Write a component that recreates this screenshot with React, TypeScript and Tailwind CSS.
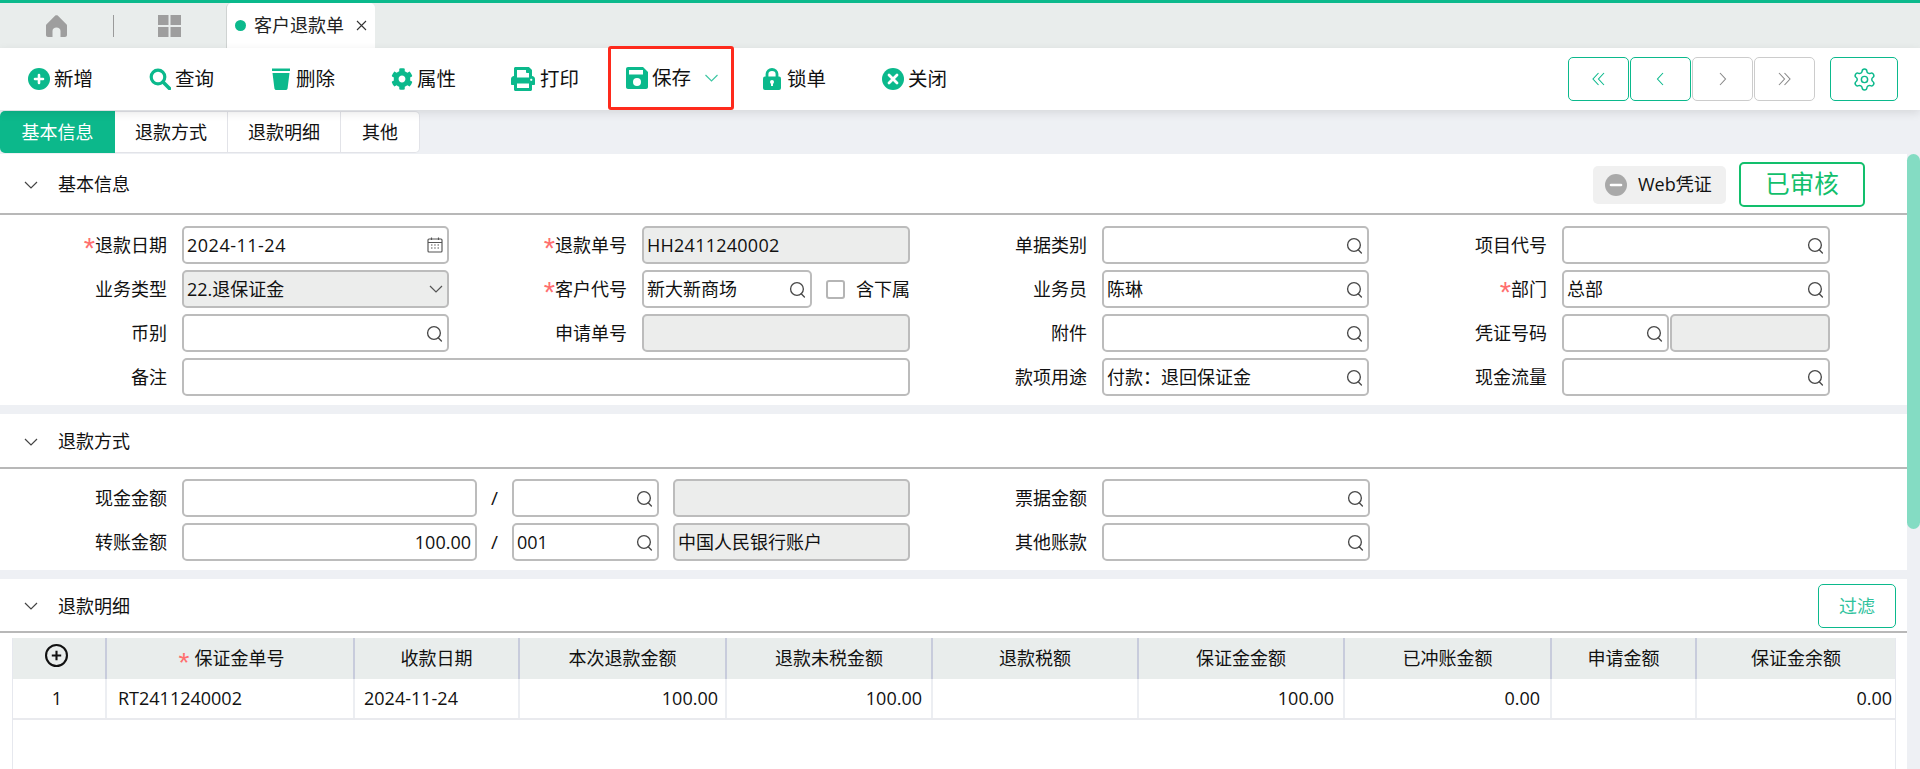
import React from "react";
import { Settings } from "lucide-react";
import { FaCog, FaPrint } from "react-icons/fa";

const G = "#0bb98c";

function SearchIcon() {
  return (
    <svg width="17" height="17" viewBox="0 0 16 16" fill="none" stroke="#484848" strokeWidth="1.25" className="shrink-0">
      <circle cx="7.5" cy="7.5" r="6" />
      <path d="M11.5 12 L14.5 15" strokeLinecap="round" />
    </svg>
  );
}
function CalendarIcon() {
  return (
    <svg width="16" height="16" viewBox="0 0 16 16" fill="none" stroke="#555" strokeWidth="1.15" className="shrink-0">
      <rect x="1" y="2" width="14" height="13" rx="1" />
      <path d="M1 5.5H15M4.5 0.5V3M11.5 0.5V3" />
      <path d="M4 8H5.5M7.2 8H8.7M10.5 8H12M4 11H5.5M7.2 11H8.7M10.5 11H12" />
    </svg>
  );
}
function Chevron({ color = "#555", w = 14, h = 8 }: { color?: string; w?: number; h?: number }) {
  return (
    <svg width={w} height={h} viewBox="0 0 14 8" fill="none" stroke={color} strokeWidth="1.2" className="shrink-0">
      <path d="M1 1 L7 7 L13 1" />
    </svg>
  );
}
function Pager({ kind, color }: { kind: "ll" | "l" | "r" | "rr"; color: string }) {
  const d = {
    ll: "M6.5 1 L1 7 L6.5 13 M12 1 L6.5 7 L12 13",
    l: "M9 1 L3.5 7 L9 13",
    r: "M4 1 L9.5 7 L4 13",
    rr: "M1 1 L6.5 7 L1 13 M6.5 1 L12 7 L6.5 13",
  }[kind];
  return (
    <svg width="13" height="14" viewBox="0 0 13 14" fill="none" stroke={color} strokeWidth="1.1">
      <path d={d} />
    </svg>
  );
}

const toolIcons: Record<string, React.ReactNode> = {
  新增: (
    <svg width="22" height="22" viewBox="0 0 22 22">
      <circle cx="11" cy="11" r="11" fill={G} />
      <path d="M11 7V15M7 11H15" stroke="#fff" strokeWidth="2.6" strokeLinecap="round" />
    </svg>
  ),
  查询: (
    <svg width="22" height="22" viewBox="0 0 22 22" fill="none" stroke={G}>
      <circle cx="9" cy="9" r="6.8" strokeWidth="3.2" />
      <path d="M14 14 L20.5 20.5" strokeWidth="3.6" strokeLinecap="round" />
    </svg>
  ),
  删除: (
    <svg width="20" height="22" viewBox="0 0 20 22" fill={G}>
      <path d="M1 0.5H19V3H1Z" />
      <path d="M1.5 5H18.5L16.6 20.2C16.5 21.3 15.6 22 14.6 22H5.4C4.4 22 3.5 21.3 3.4 20.2Z" />
    </svg>
  ),
  属性: <FaCog size={22} color={G} />,
  打印: <FaPrint size={24} color={G} />,
  保存: (
    <svg width="22" height="22" viewBox="0 0 22 22">
      <path d="M2 0H17L22 5V20C22 21.1 21.1 22 20 22H2C0.9 22 0 21.1 0 20V2C0 0.9 0.9 0 2 0Z" fill={G} />
      <rect x="3" y="3" width="14" height="4.5" fill="#fff" />
      <circle cx="11" cy="15" r="4" fill="#fff" />
    </svg>
  ),
  锁单: (
    <svg width="18" height="22" viewBox="0 0 18 22">
      <path d="M4 10V6C4 3.2 6.2 1.5 9 1.5C11.8 1.5 14 3.2 14 6V10" fill="none" stroke={G} strokeWidth="2.8" />
      <rect x="0" y="8.5" width="18" height="13.5" rx="2" fill={G} />
      <circle cx="9" cy="14" r="2" fill="#fff" />
      <rect x="8" y="14" width="2" height="4" fill="#fff" />
    </svg>
  ),
  关闭: (
    <svg width="22" height="22" viewBox="0 0 22 22">
      <circle cx="11" cy="11" r="11" fill={G} />
      <path d="M7 7L15 15M15 7L7 15" stroke="#fff" strokeWidth="2.8" strokeLinecap="round" />
    </svg>
  ),
};

function Tool({ name, className, wide }: { name: string; className: string; wide?: boolean }) {
  return (
    <div className={`flex items-center shrink-0 ${wide ? "gap-[5px]" : "gap-[4px]"} ${className}`}>
      <span className={`flex justify-center ${wide ? "w-[24px]" : "w-[22px]"}`}>{toolIcons[name]}</span>
      <span className="text-[19.5px] text-[#111]">{name}</span>
    </div>
  );
}

function Label({ text, star }: { text: string; star?: boolean }) {
  return (
    <div className="flex items-center justify-end pr-[15px] text-[18px] text-[#111] whitespace-nowrap">
      {star && <span className="text-[#ff6f6f] text-[29px] leading-none font-['Liberation_Sans'] h-[22px]">*</span>}
      {text}
    </div>
  );
}

function Input({
  value,
  icon,
  disabled,
  right,
  className = "",
  valueClass = "",
}: {
  value?: string;
  icon?: "search" | "cal" | "down";
  disabled?: boolean;
  right?: boolean;
  className?: string;
  valueClass?: string;
}) {
  return (
    <div
      className={`h-[38px] border-2 border-[#bcbcbc] rounded-[5px] flex items-center pl-[3px] pr-[4px] text-[18px] text-[#111] whitespace-nowrap ${
        disabled ? "bg-[#ecedec]" : "bg-white"
      } ${right ? "justify-end" : "justify-between"} ${className}`}
    >
      <span className={valueClass}>{value}</span>
      {icon === "search" && <SearchIcon />}
      {icon === "cal" && <CalendarIcon />}
      {icon === "down" && <Chevron />}
    </div>
  );
}

function SectionHead({ title, h, children }: { title: string; h: string; children?: React.ReactNode }) {
  return (
    <div className={`flex items-center border-b-2 border-[#b8b8b8] pl-[24px] pt-[2px] ${h}`}>
      <Chevron color="#444" />
      <span className="ml-[20px] text-[18px] text-[#111]">{title}</span>
      <div className="ml-auto flex items-center">{children}</div>
    </div>
  );
}

const headers = ["保证金单号", "收款日期", "本次退款金额", "退款未税金额", "退款税额", "保证金金额", "已冲账金额", "申请金额", "保证金余额"];
const cols = "grid grid-cols-[94px_248px_165px_207px_206px_206px_206px_207px_145px_198px]";

export default function App() {
  return (
    <div className="w-[1920px] h-[769px] overflow-hidden flex flex-col bg-[#eef0f4] font-['Open_Sans','Noto_Sans_CJK_SC',sans-serif]">
      <div className="h-[3px] shrink-0 bg-[#0bb98c]" />

      {/* tab strip */}
      <div className="h-[45px] shrink-0 bg-[#e9edec] flex items-center pl-[46px]">
        <svg width="21" height="22" viewBox="0 0 21 22" fill="#9e9e9e">
          <path d="M9.3 0.6C10 0 11 0 11.7 0.6L20.4 9.2C20.8 9.6 21 10 21 10.6V20C21 21.1 20.1 22 19 22H14.5V16C14.5 14 12.8 12.5 10.5 12.5C8.2 12.5 6.5 14 6.5 16V22H2C0.9 22 0 21.1 0 20V10.6C0 10 0.2 9.6 0.6 9.2Z" />
        </svg>
        <div className="ml-[46px] w-px h-[22px] bg-[#9a9a9a]" />
        <svg className="ml-[44px]" width="23" height="22" viewBox="0 0 23 22" fill="#9e9e9e">
          <rect x="0" y="0" width="10.5" height="10" />
          <rect x="12.5" y="0" width="10.5" height="10" />
          <rect x="0" y="12" width="10.5" height="10" />
          <rect x="12.5" y="12" width="10.5" height="10" />
        </svg>
        <div className="ml-[45px] w-[149px] h-full bg-white rounded-t-[5px] border-l border-[#cfd3d2] flex items-center pl-[8px]">
          <span className="w-[11px] h-[11px] rounded-full bg-[#0bb98c] shrink-0" />
          <span className="ml-[8px] text-[18px] text-[#222] whitespace-nowrap">客户退款单</span>
          <svg className="ml-[12px]" width="11" height="11" viewBox="0 0 11 11" stroke="#333" strokeWidth="1.1">
            <path d="M1 1L10 10M10 1L1 10" />
          </svg>
        </div>
      </div>

      {/* toolbar */}
      <div className="relative z-10 h-[62px] shrink-0 bg-white shadow-[0_3px_9px_rgba(0,0,0,0.1)] flex items-center pl-[28px]">
        <Tool name="新增" className="w-[121px]" />
        <Tool name="查询" className="w-[121px]" />
        <Tool name="删除" className="w-[121px]" />
        <Tool name="属性" className="w-[120px]" />
        <Tool name="打印" wide className="w-[97px]" />
        <div className="self-start -mt-[2px] h-[64px] w-[126px] border-[3px] border-[#fe2a1c] rounded-[3px] flex items-center pl-[15px] shrink-0">
          <Tool name="保存" className="" />
          <span className="ml-[13px]">
            <Chevron color="#3fc7a3" w={15} h={8} />
          </span>
        </div>
        <Tool name="锁单" className="ml-[27px] w-[121px]" />
        <Tool name="关闭" className="" />
        <div className="ml-auto flex items-center pr-[22px]">
          <div className="flex gap-px">
            <button className="w-[61px] h-[44px] border border-[#0bb98c] rounded-[5px] flex items-center justify-center">
              <Pager kind="ll" color="#0bb98c" />
            </button>
            <button className="w-[61px] h-[44px] border border-[#0bb98c] rounded-[5px] flex items-center justify-center">
              <Pager kind="l" color="#0bb98c" />
            </button>
            <button className="w-[61px] h-[44px] border border-[#cccccc] rounded-[5px] flex items-center justify-center">
              <Pager kind="r" color="#888888" />
            </button>
            <button className="w-[61px] h-[44px] border border-[#cccccc] rounded-[5px] flex items-center justify-center">
              <Pager kind="rr" color="#888888" />
            </button>
          </div>
          <button className="ml-[15px] w-[68px] h-[44px] border border-[#0bb98c] rounded-[5px] flex items-center justify-center">
            <Settings size={25} strokeWidth={1.4} color="#0bb98c" />
          </button>
        </div>
      </div>

      {/* sub tabs */}
      <div className="h-[44px] shrink-0 pt-px">
        <div className="w-[420px] h-[42px] bg-white border-y border-r border-[#e2e3e8] rounded-[5px] flex text-[18px] text-[#111]">
          <div className="w-[115px] -my-px bg-[#0cb88b] rounded-l-[5px] text-white flex items-center justify-center">基本信息</div>
          <div className="w-[113px] border-r border-[#e2e3e8] flex items-center justify-center">退款方式</div>
          <div className="w-[113px] border-r border-[#e2e3e8] flex items-center justify-center">退款明细</div>
          <div className="flex-1 flex items-center justify-center">其他</div>
        </div>
      </div>

      {/* body */}
      <div className="flex-1 min-h-0 flex">
        <div className="w-[1907px] shrink-0 flex flex-col gap-[9px]">
          {/* section 1 */}
          <section className="bg-white h-[251px] shrink-0">
            <SectionHead title="基本信息" h="h-[61px]">
              <div className="w-[133px] h-[38px] bg-[#f0f0f0] rounded-[5px] flex items-center pl-[12px] mr-[13px]">
                <svg width="22" height="22" viewBox="0 0 22 22">
                  <circle cx="11" cy="11" r="11" fill="#a9a9a9" />
                  <path d="M6 11H16" stroke="#fff" strokeWidth="2.6" strokeLinecap="round" />
                </svg>
                <span className="ml-[11px] text-[18px] text-[#111] whitespace-nowrap">Web凭证</span>
              </div>
              <div className="w-[126px] h-[45px] border-2 border-[#12bf6c] rounded-[5px] mr-[42px] flex items-center justify-center text-[24.5px] text-[#12bf6c]">
                已审核
              </div>
            </SectionHead>
            <div className="pt-[11px] grid grid-cols-[182px_267px_193px_268px_192px_267px_193px_268px] auto-rows-[38px] gap-y-[6px]">
              <Label text="退款日期" star />
              <Input value="2024-11-24" icon="cal" valueClass="tracking-[0.5px]" />
              <Label text="退款单号" star />
              <Input value="HH2411240002" disabled valueClass="tracking-[0.25px]" />
              <Label text="单据类别" />
              <Input icon="search" />
              <Label text="项目代号" />
              <Input icon="search" />

              <Label text="业务类型" />
              <Input value="22.退保证金" icon="down" disabled />
              <Label text="客户代号" star />
              <div className="flex items-center">
                <Input value="新大新商场" icon="search" className="w-[170px] shrink-0" />
                <span className="ml-[14px] w-[19px] h-[19px] border-2 border-[#b5b5b5] rounded-[3px] shrink-0" />
                <span className="ml-[11px] text-[18px] text-[#111] whitespace-nowrap">含下属</span>
              </div>
              <Label text="业务员" />
              <Input value="陈琳" icon="search" />
              <Label text="部门" star />
              <Input value="总部" icon="search" />

              <Label text="币别" />
              <Input icon="search" />
              <Label text="申请单号" />
              <Input disabled />
              <Label text="附件" />
              <Input icon="search" />
              <Label text="凭证号码" />
              <div className="flex gap-px">
                <Input icon="search" className="w-[107px] shrink-0" />
                <Input disabled className="flex-1" />
              </div>

              <Label text="备注" />
              <Input className="col-span-3" />
              <Label text="款项用途" />
              <Input value="付款：退回保证金" icon="search" />
              <Label text="现金流量" />
              <Input icon="search" />
            </div>
          </section>

          {/* section 2 */}
          <section className="bg-white h-[156px] shrink-0">
            <SectionHead title="退款方式" h="h-[55px]" />
            <div className="pt-[10px] grid grid-cols-[182px_295px_35px_147px_14px_237px_192px_268px] auto-rows-[38px] gap-y-[6px]">
              <Label text="现金金额" />
              <Input />
              <div className="flex items-center justify-center text-[19px] text-[#111]">/</div>
              <Input icon="search" />
              <div />
              <Input disabled />
              <Label text="票据金额" />
              <Input icon="search" />

              <Label text="转账金额" />
              <Input value="100.00" right />
              <div className="flex items-center justify-center text-[19px] text-[#111]">/</div>
              <Input value="001" icon="search" />
              <div />
              <Input value="中国人民银行账户" disabled />
              <Label text="其他账款" />
              <Input icon="search" />
            </div>
          </section>

          {/* section 3 */}
          <section className="bg-white flex-1 min-h-0 flex flex-col">
            <SectionHead title="退款明细" h="h-[54px]">
              <div className="w-[78px] h-[44px] mr-[11px] border border-[#0bb98c] rounded-[5px] flex items-center justify-center text-[18px] text-[#2fc29c]">
                过滤
              </div>
            </SectionHead>
            <div className="mt-[5px] ml-[12px] w-[1884px] flex-1 border-x border-[#e6e8ee]">
              <div className={`${cols} h-[41px] bg-[#e9edec] text-[18px] text-[#111]`}>
                <div className="flex items-center justify-center pr-[6px] border-r-2 border-[#c8ccdc]">
                  <svg width="23" height="23" viewBox="0 0 22 22" fill="none" stroke="#111" className="-mt-[6px]">
                    <circle cx="11" cy="11" r="10" strokeWidth="2" />
                    <path d="M11 6.5V15.5M6.5 11H15.5" strokeWidth="2" />
                  </svg>
                </div>
                {headers.map((h, i) => (
                  <div
                    key={h}
                    className={`flex items-center justify-center whitespace-nowrap ${
                      i < headers.length - 1 ? "border-r-2 border-[#c8ccdc]" : ""
                    } ${i === 0 ? "pl-[3px]" : ""}`}
                  >
                    {i === 0 && <span className="text-[#ff6f6f] text-[28px] font-['Liberation_Sans'] mr-[5px] h-[22px] leading-[30px]">*</span>}
                    {h}
                  </div>
                ))}
              </div>
              <div className={`${cols} h-[41px] border-b-2 border-[#e9eaee] text-[18px] text-[#111]`}>
                <div className="flex items-center justify-center pr-[4px] border-r-2 border-[#eceef2]">1</div>
                <div className="flex items-center pl-[11px] border-r-2 border-[#eceef2]">RT2411240002</div>
                <div className="flex items-center pl-[9px] border-r-2 border-[#eceef2]">2024-11-24</div>
                <div className="flex items-center justify-end pr-[7px] border-r-2 border-[#eceef2]">100.00</div>
                <div className="flex items-center justify-end pr-[9px] border-r-2 border-[#eceef2]">100.00</div>
                <div className="border-r-2 border-[#eceef2]" />
                <div className="flex items-center justify-end pr-[9px] border-r-2 border-[#eceef2]">100.00</div>
                <div className="flex items-center justify-end pr-[10px] border-r-2 border-[#eceef2]">0.00</div>
                <div className="border-r-2 border-[#eceef2]" />
                <div className="flex items-center justify-end pr-[3px]">0.00</div>
              </div>
            </div>
          </section>
        </div>

        {/* scrollbar */}
        <div className="flex-1">
          <div className="h-[375px] bg-[#84dcc3] rounded-[7px]" />
        </div>
      </div>
    </div>
  );
}
